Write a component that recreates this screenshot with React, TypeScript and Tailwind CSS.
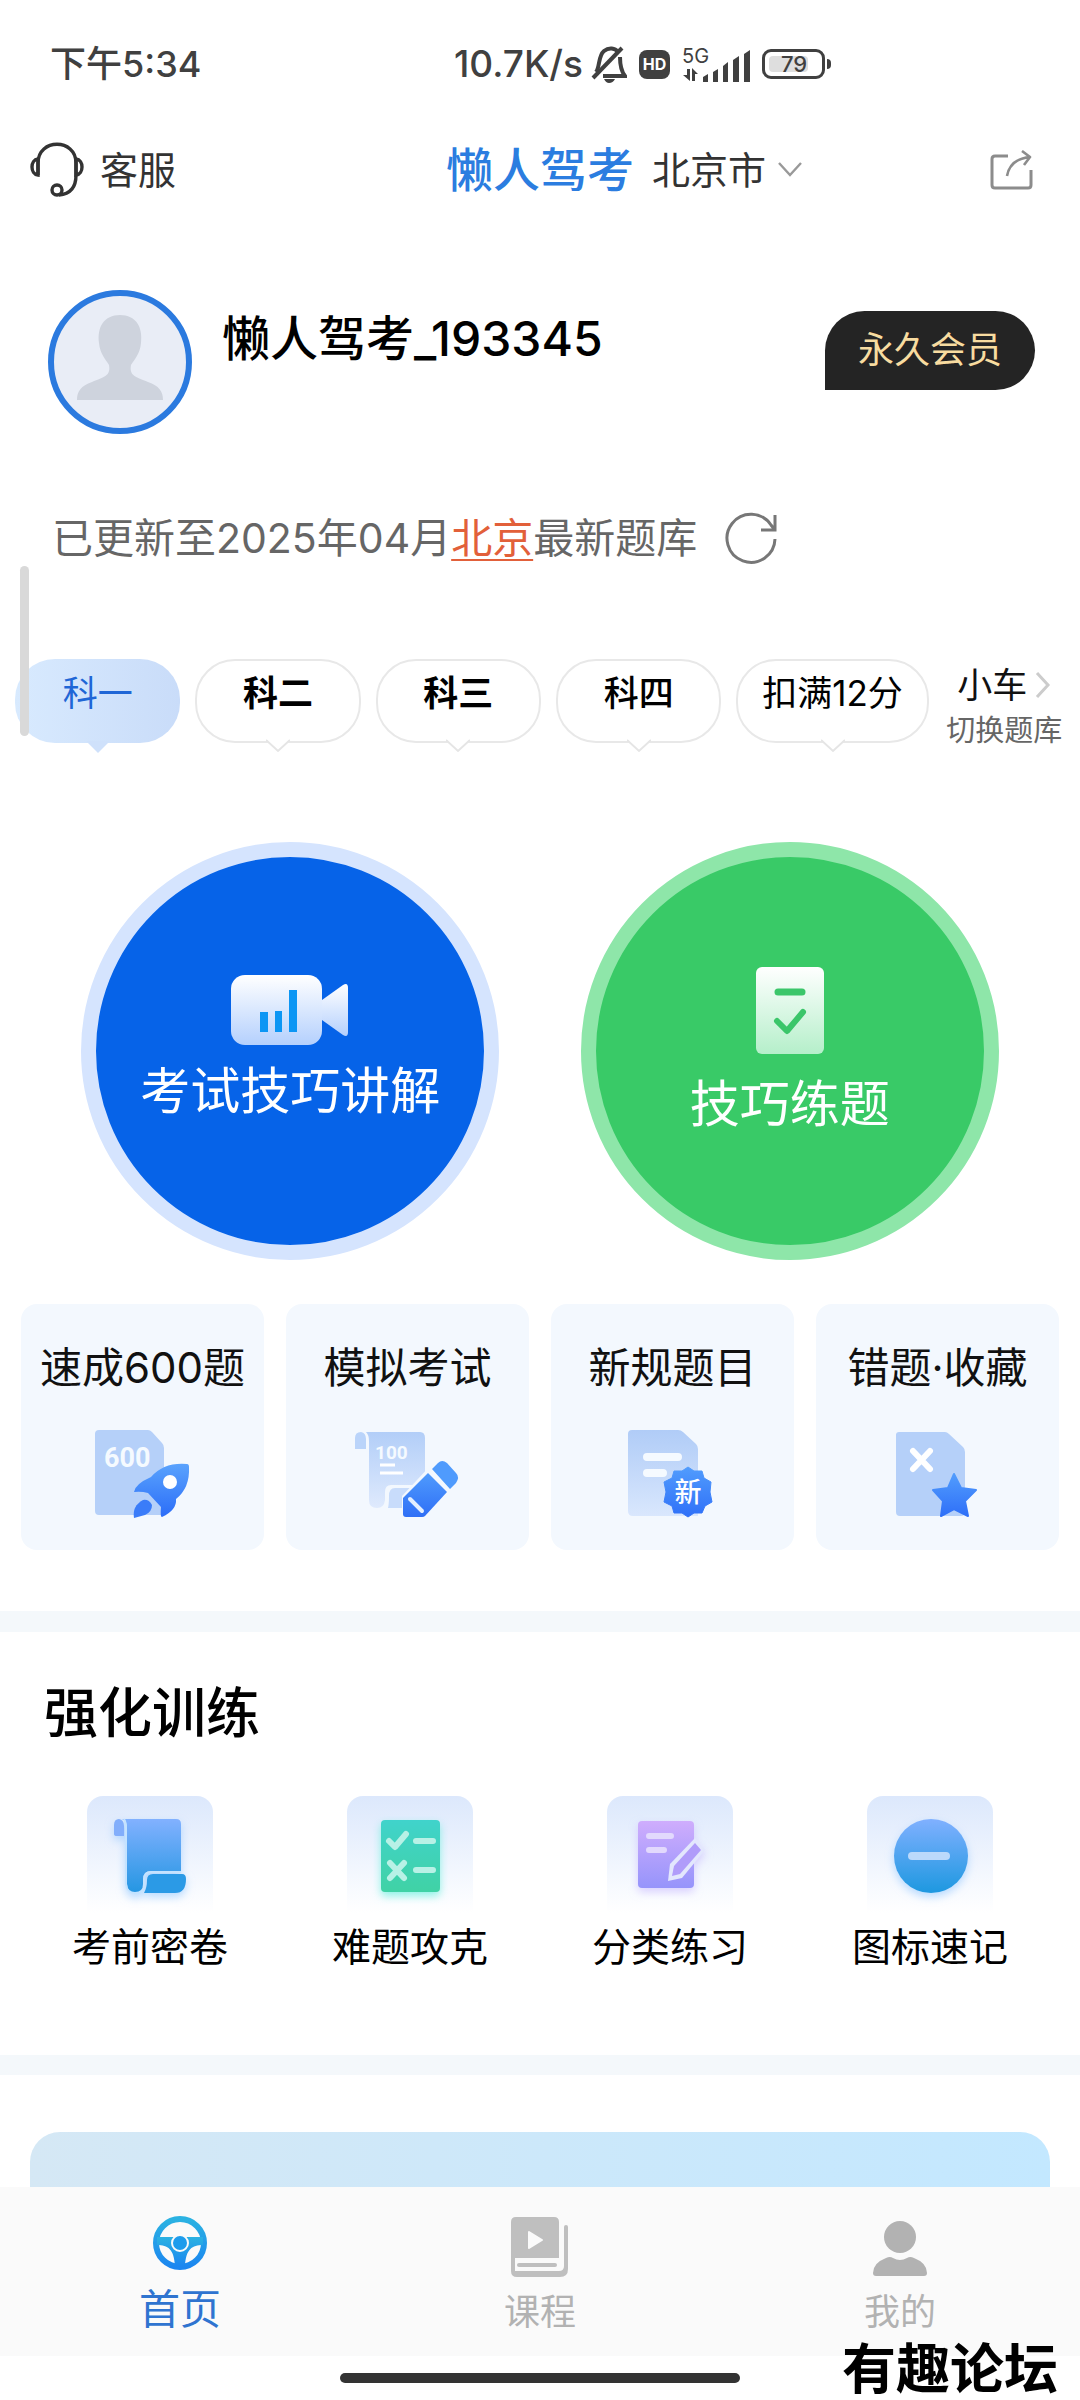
import { useState } from 'react'
import type { ReactNode } from 'react'

type Tab = { label: string; weight: string }

const tabs: Tab[] = [
  { label: '科一', weight: 'font-normal' },
  { label: '科二', weight: 'font-bold' },
  { label: '科三', weight: 'font-bold' },
  { label: '科四', weight: 'font-medium' },
  { label: '扣满12分', weight: 'font-normal' },
]

// one vertical gradient, top to bottom
function Fade({ id, from, to }: { id: string; from: string; to: string }) {
  return (
    <linearGradient id={id} x1="0" y1="0" x2="0" y2="1">
      <stop offset="0" stopColor={from} />
      <stop offset="1" stopColor={to} />
    </linearGradient>
  )
}

function StatusBar() {
  return (
    <div className="flex h-32 items-center pl-[50px] text-4xl font-medium text-[#404040]">
      <span className="w-[404px]">下午5:34</span>
      <span className="text-[37px]">10.7K/s</span>
      <svg className="ml-2 h-10 w-9" viewBox="0 0 36 40" fill="none" stroke="#404040" strokeWidth="4">
        <path d="M5 28 C9 23 7 12 13 7 C18 3 24 4 27 8" />
        <path d="M2 34 L31 4" />
        <path d="M29 13 C29 22 30 27 34 32 H12" />
        <path d="M13 35 H24 Q22 39 18 39 Q15 39 13 35Z" fill="#404040" stroke="none" />
      </svg>
      <span className="ml-3 flex h-[29px] w-[31px] items-center justify-center rounded-lg bg-[#404040] text-base font-bold text-white">HD</span>
      <div className="ml-3 flex h-9 w-[68px] items-end">
        <div className="flex w-5 flex-col">
          <span className="text-xl leading-5 font-normal">5G</span>
          <svg className="h-4 w-5" viewBox="0 0 20 16" fill="#404040">
            <path d="M5 3 h3 v12 L1 9 h4z M10 15 h3 V8 h3 L10 2z" />
          </svg>
        </div>
        <svg className="h-8 w-12" viewBox="0 0 48 32" fill="#404040">
          <path d="M1 27 L6 24 V32 H1z M11 22 L16 19 V32 H11z M21 16 L26 12 V32 H21z M31 10 L37 6 V32 H31z M42 4 L48 0 V32 H42z" />
        </svg>
      </div>
      <div className="ml-3 flex h-[30px] w-[63px] items-center rounded-[9px] border-[3px] border-[#404040] p-1">
        <span className="h-full w-[39px] rounded-sm bg-[#dedede] pl-3 text-[22px] leading-4">79</span>
      </div>
      <span className="ml-[2px] h-[10px] w-1 rounded-r bg-[#404040]" />
    </div>
  )
}

function Header() {
  return (
    <header className="grid h-[84px] grid-cols-[1fr_auto_1fr] items-center px-[30px] text-[38px] text-[#333]">
      <button type="button" className="flex items-center gap-4 justify-self-start">
        <svg className="h-[56px] w-[54px]" viewBox="0 0 54 56" fill="none" stroke="#333" strokeWidth="3.4">
          <path d="M8 33 V21 C8 -4 46 -4 46 21 V33 C46 45 41 52 29 53" />
          <path d="M8 17 C0 18 0 32 8 33z M46 17 C54 18 54 32 46 33z" />
          <circle cx="27" cy="48" r="5" />
        </svg>
        客服
      </button>
      <h1 className="text-[47px] font-medium text-[#2b7de0]">懒人驾考</h1>
      <div className="flex items-center justify-between pl-[18px]">
        <button type="button" className="flex items-center gap-3">
          北京市
          <svg className="h-4 w-6" viewBox="0 0 24 16" fill="none" stroke="#999" strokeWidth="2.4">
            <path d="M1 1 L12 13 L23 1" />
          </svg>
        </button>
        <button type="button" aria-label="分享">
          <svg className="mr-4 h-10 w-[44px]" viewBox="0 0 44 40" fill="none" stroke="#8c8c8c" strokeWidth="3" strokeLinejoin="round">
            <path d="M18 6 H5 Q2 6 2 9 V35 Q2 38 5 38 H38 Q41 38 41 35 V20" />
            <path d="M17 26 Q20 9 40 7 M32 1 L40 7 L34 15" strokeWidth="2.6" />
          </svg>
        </button>
      </div>
    </header>
  )
}

function Profile() {
  return (
    <section className="mt-[78px] flex items-start pr-[45px] pl-12">
      <div className="h-36 w-36 overflow-hidden rounded-full border-[6px] border-[#2b7adf] bg-[#e9edf6]">
        <svg viewBox="0 0 132 132">
          <path
            d="M66 19 C82 19 89 31 87 47 C86 58 80 64 77 69 C75 80 82 81 94 86 C105 90 109 95 109 104 H23 C23 95 27 90 38 86 C50 81 57 80 55 69 C52 64 46 58 45 47 C43 31 50 19 66 19Z"
            fill="#ced3dd"
          />
        </svg>
      </div>
      <p className="ml-[30px] flex-1 pt-4 text-5xl leading-[66px] font-medium text-black">懒人驾考_193345</p>
      <span className="mt-[21px] rounded-[40px] rounded-bl-none bg-[#242424] px-[33px] py-3 text-4xl leading-[55px] text-[#f8dca0]">永久会员</span>
    </section>
  )
}

function TabTail({ active }: { active: boolean }) {
  return (
    <svg className="absolute -bottom-3 left-1/2 h-[14px] w-6 -translate-x-1/2" viewBox="0 0 24 14">
      <path d="M0 0 L12 12 L24 0z" fill={active ? '#cfe1fb' : '#fff'} />
      {!active && <path d="M0 1 L12 12 L24 1" fill="none" stroke="#e5e5e5" strokeWidth="2" />}
    </svg>
  )
}

function SubjectTabs() {
  const [current, setCurrent] = useState('科一')

  return (
    <nav className="mt-[95px] grid grid-cols-[165fr_165fr_165fr_165fr_192fr_121fr] gap-[15px] px-[15px]">
      {tabs.map((t) => {
        const active = t.label === current
        return (
          <button
            key={t.label}
            type="button"
            onClick={() => setCurrent(t.label)}
            className={`relative h-[84px] rounded-[40px] pb-4 text-[35px] whitespace-nowrap ${t.weight} ${
              active ? 'bg-linear-to-r from-[#d8eafe] to-[#c9dcf9] text-[#1f66d6]' : 'border-2 border-[#e8e8e8] bg-white text-black'
            }`}
          >
            {t.label}
            <TabTail active={active} />
          </button>
        )
      })}
      <button type="button" className="flex flex-col items-center whitespace-nowrap text-[#111]">
        <span className="flex items-center gap-2 text-[35px] leading-[52px]">
          小车
          <svg className="h-7 w-4" viewBox="0 0 16 28" fill="none" stroke="#ccc" strokeWidth="3">
            <path d="M2 2 L13 14 L2 26" />
          </svg>
        </span>
        <span className="text-[29px] leading-10 text-[#666]">切换题库</span>
      </button>
    </nav>
  )
}

function BigCircle({ color, label, children }: { color: string; label: string; children: ReactNode }) {
  return (
    <button
      type="button"
      className={`flex h-[418px] w-[418px] flex-col items-center justify-center rounded-full border-[15px] text-[50px] leading-[72px] text-white ${color}`}
    >
      {children}
      {label}
    </button>
  )
}

function VideoIcon() {
  return (
    <svg className="mb-[10px] h-[70px] w-[118px]" viewBox="0 0 118 70">
      <defs>
        <Fade id="video" from="#ffffff" to="#b4d0fd" />
      </defs>
      <rect width="91" height="70" rx="14" fill="url(#video)" />
      <path d="M91 25 L112 10 Q117 7 117 13 V57 Q117 63 112 60 L91 45z" fill="url(#video)" />
      <path d="M29 37 h8 v20 h-8z M44 36 h7 v21 h-7z M58 15 h8 v42 h-8z" fill="#0c96f4" />
    </svg>
  )
}

function TestIcon() {
  return (
    <svg className="mt-1 mb-[14px] h-[87px] w-[68px]" viewBox="0 0 68 87">
      <defs>
        <Fade id="test" from="#ffffff" to="#b5efca" />
      </defs>
      <rect width="68" height="87" rx="6" fill="url(#test)" />
      <path d="M22 25 H46" stroke="#3bc66a" strokeWidth="7" strokeLinecap="round" />
      <path d="M21 54 L31 64 L47 45" fill="none" stroke="#3bc66a" strokeWidth="6" strokeLinecap="round" strokeLinejoin="round" />
    </svg>
  )
}

function Icon600() {
  return (
    <svg className="h-24 w-[110px]" viewBox="0 0 110 96">
      <defs>
        <Fade id="rocket" from="#5aa3fd" to="#2b6df8" />
      </defs>
      <path d="M11 4 H60 Q62 4 64 6 L74 17 Q76 19 76 22 V85 Q76 89 72 89 H11 Q7 89 7 85 V8 Q7 4 11 4z" fill="#b5d0f9" />
      <text x="16" y="41" fontSize="27" fontWeight="700" fontFamily="Roboto, sans-serif" fill="#f5faff">600</text>
      <path
        d="M46 66 Q47 58 63 51 Q76 36 99 38 Q101 38 101 41 Q102 62 88 73 Q89 84 74 91 Q72 91 73 81 L60 67 Q53 65 46 66Z"
        fill="url(#rocket)"
      />
      <circle cx="82" cy="56" r="7" fill="#fff" />
      <path d="M46 92 Q44 80 55 74 Q61 73 64 79 Q64 86 57 89z" fill="#3a7cf9" />
    </svg>
  )
}

function IconMock() {
  return (
    <svg className="h-24 w-[110px]" viewBox="0 0 110 96">
      <defs>
        <Fade id="sheet" from="#b2cef8" to="#dfeafd" />
        <Fade id="pencil" from="#4f9bfd" to="#2f6ff6" />
      </defs>
      <path d="M2 23 V12 Q2 6 8 6 Q13 7 13 13 V23z" fill="#bad4fa" />
      <path d="M15 6 H67 Q72 6 72 12 V59 H38 Q32 59 32 66 V74 Q31 82 24 82 Q16 82 16 74 V15 Q16 9 13 6z" fill="url(#sheet)" />
      <path d="M35 82 Q36 78 36 70 Q36 62 42 62 H68 V82z" fill="#c8dcfb" />
      <text x="22" y="33" fontSize="19" fontWeight="700" fontFamily="Roboto, sans-serif" fill="#f5faff">100</text>
      <path d="M27 39 H42 M27 47 H50" stroke="#fff" strokeWidth="3" />
      <path d="M78 39 L97 64 L72 92 H52 Q49 92 49 88 V70z" fill="#f3f8fe" />
      <path d="M50 72 L75 47 L94 66 L72 90 Q71 91 69 91 H53 Q50 91 50 88z" fill="url(#pencil)" />
      <path d="M79 43 L85 37 Q89 33 94 37 L103 47 Q107 51 103 57 L97 63z" fill="#4f9bfd" />
      <path d="M57 73 L69 85" stroke="#e3efff" strokeWidth="4" strokeLinecap="round" />
    </svg>
  )
}

function IconNew() {
  return (
    <svg className="h-24 w-[110px]" viewBox="0 0 110 96">
      <defs>
        <Fade id="newdoc" from="#b0ccf7" to="#d9e7fd" />
        <Fade id="seal" from="#519cfd" to="#2f70f8" />
      </defs>
      <path d="M14 4 H60 Q63 4 65 6 L78 18 Q80 20 80 23 V90 H15 Q10 90 10 85 V8 Q10 4 14 4z" fill="url(#newdoc)" />
      <path d="M29 31 H60 M29 47 H45" stroke="#f5faff" strokeWidth="8" strokeLinecap="round" />
      <path
        d="M70 41 L76 45 L84 45 L86 52 L93 56 L92 66 L94 76 L87 80 L84 87 L76 87 L70 91 L64 87 L56 87 L54 80 L46 76 L48 66 L46 56 L54 52 L56 45 L64 45z"
        fill="url(#seal)"
        stroke="url(#seal)"
        strokeLinejoin="round"
      />
      <text x="70" y="76" fontSize="27" fontWeight="500" textAnchor="middle" fill="#fff">新</text>
    </svg>
  )
}

function IconWrong() {
  return (
    <svg className="h-24 w-[110px]" viewBox="0 0 110 96">
      <path d="M16 6 H62 Q64 6 66 8 L80 21 Q82 23 82 26 V86 Q82 90 78 90 H17 Q13 90 13 86 V9 Q13 6 16 6z" fill="#b5d0f9" />
      <path d="M30 25 L47 43 M47 25 L30 43" stroke="#fff" strokeWidth="6" strokeLinecap="round" />
      <path
        d="M71 48 L78 62 L93 64 L82 75 L85 90 L71 83 L58 90 L60 75 L50 64 L65 62z"
        fill="url(#seal)"
        stroke="url(#seal)"
        strokeWidth="2"
        strokeLinejoin="round"
      />
    </svg>
  )
}

function PaperIcon() {
  return (
    <g>
      <defs>
        <Fade id="paper" from="#82b1ff" to="#2496e2" />
      </defs>
      <path d="M27 38 V29 Q27 23 32 23 Q37 24 37 30 V40 H30 Q27 40 27 38z" fill="#82aefb" />
      <path d="M35 23 H89 Q94 23 94 28 V75 H64 Q57 75 57 82 V88 Q56 97 48 97 Q40 97 40 88 V32 Q40 25 35 23z" fill="url(#paper)" />
      <path d="M37 23 Q39 26 39 32 V88 Q40 97 48 97 Q57 97 57 88 V83 Q57 76 64 76 H94" fill="none" stroke="#c4e3ff" strokeWidth="2" />
      <path d="M57 97 Q60 92 60 84 Q60 78 66 78 H95 Q99 78 99 83 Q99 97 88 97z" fill="#2b9ae6" />
    </g>
  )
}

function HardIcon() {
  return (
    <g fill="none" stroke="#b8f1e6" strokeWidth="6" strokeLinecap="round" strokeLinejoin="round">
      <defs>
        <Fade id="hard" from="#40d3cb" to="#40d2a5" />
      </defs>
      <rect x="34" y="24" width="59" height="72" rx="4" fill="url(#hard)" stroke="none" />
      <path d="M42 45 L48 51 L59 38 M69 45 H86 M69 74 H86 M43 67 L57 82 M57 67 L43 82" />
    </g>
  )
}

function SortIcon() {
  return (
    <g strokeLinecap="round">
      <defs>
        <Fade id="sort" from="#cfadfd" to="#9694fb" />
      </defs>
      <rect x="31" y="25" width="56" height="67" rx="4" fill="url(#sort)" />
      <path d="M42 40 H64 M42 54 H57" stroke="#e2d9fd" strokeWidth="6" />
      <path d="M88 42 L98 54 L75 82 L61 85 L63 68z" fill="#e3e7fd" />
      <path d="M88 47 L94 54 L73 78 L65 80 L67 70z" fill="#b09cfa" />
    </g>
  )
}

function SignIcon() {
  return (
    <g>
      <defs>
        <Fade id="sign" from="#80b0ff" to="#1d98e0" />
      </defs>
      <circle cx="64" cy="60" r="37" fill="url(#sign)" />
      <path d="M45 60 H79" stroke="#bbd9fb" strokeWidth="8" strokeLinecap="round" />
    </g>
  )
}

const cards = [
  { label: '速成600题', icon: <Icon600 /> },
  { label: '模拟考试', icon: <IconMock /> },
  { label: '新规题目', icon: <IconNew /> },
  { label: '错题·收藏', icon: <IconWrong /> },
]

const trainings = [
  { label: '考前密卷', icon: <PaperIcon />, shadow: 'drop-shadow-blue-300/60' },
  { label: '难题攻克', icon: <HardIcon />, shadow: 'drop-shadow-teal-300/60' },
  { label: '分类练习', icon: <SortIcon />, shadow: 'drop-shadow-violet-300/60' },
  { label: '图标速记', icon: <SignIcon />, shadow: 'drop-shadow-blue-300/60' },
]

function BottomNav() {
  return (
    <nav className="grid h-[169px] grid-cols-3 bg-[#fafafa] text-4xl text-[#b2b2b2]">
      <a href="#home" className="flex flex-col items-center pt-7 text-[41px] text-[#2f74d0]">
        <svg className="h-14 w-14" viewBox="0 0 56 56">
          <defs>
            <Fade id="wheel" from="#2bb2e2" to="#1b86f0" />
          </defs>
          <circle cx="28" cy="28" r="24" fill="none" stroke="url(#wheel)" strokeWidth="6" />
          <path d="M5 22 H51 V30 C40 30 34 34 33 51 H23 C22 34 16 30 5 30z" fill="url(#wheel)" />
          <circle cx="28" cy="28" r="8" fill="#1d9cec" stroke="#fafafa" strokeWidth="2" />
        </svg>
        <span className="mt-2 leading-[60px]">首页</span>
      </a>
      <a href="#course" className="flex flex-col items-center pt-[30px]">
        <svg className="h-[60px] w-[58px]" viewBox="0 0 58 60" fill="none" stroke="#bfbfbf">
          <path d="M5 0 H43 Q48 0 48 5 V41 H4 V54 H48 Q53 54 53 49 V10 Q53 8 55 8 Q57 8 57 10 V52 Q57 60 49 60 H6 Q0 60 0 54 V5 Q0 0 5 0z" fill="#bfbfbf" stroke="none" />
          <path d="M8 48 H44" strokeWidth="4" strokeLinecap="round" />
          <path d="M18 15 L31 23 L18 31z" fill="#fafafa" stroke="#fafafa" strokeWidth="2" strokeLinejoin="round" />
        </svg>
        <span className="mt-2 leading-[54px]">课程</span>
      </a>
      <a href="#mine" className="flex flex-col items-center pt-[34px]">
        <svg className="h-14 w-14" viewBox="0 0 56 56" fill="#b2b2b2">
          <circle cx="28" cy="16" r="16" />
          <path d="M14 37 Q18 35 21 37 Q28 41 35 37 Q38 35 42 37 Q55 42 55 52 Q55 55 52 55 H4 Q1 55 1 52 Q1 42 14 37z" />
        </svg>
        <span className="mt-2 leading-[54px]">我的</span>
      </a>
    </nav>
  )
}

export default function App() {
  return (
    <div className="relative flex min-h-screen flex-col bg-white font-[Inter,'Noto_Sans_CJK_SC',sans-serif] text-black">
      <StatusBar />
      <Header />
      <span className="absolute top-[566px] left-5 z-10 h-[170px] w-[9px] rounded-full bg-[#d9d9d9]" />

      <main className="flex flex-1 flex-col">
        <Profile />

        <div className="mt-[78px] flex items-center pl-[52px] text-[41px] leading-[52px] text-[#666]">
          <p>
            已更新至2025年04月
            <a href="#beijing" className="text-[#e2603a] underline decoration-2 underline-offset-[6px]">北京</a>
            最新题库
          </p>
          <button type="button" aria-label="刷新" className="ml-7">
            <svg className="h-[52px] w-[52px]" viewBox="0 0 52 52" fill="none" stroke="#777" strokeWidth="3">
              <path d="M50 27 A24 24 0 1 1 46 13 L50 18 M50 3 V18 H36" />
            </svg>
          </button>
        </div>

        <SubjectTabs />

        <section className="mt-[91px] flex justify-evenly">
          <BigCircle color="border-[#d5e4fe] bg-[#0663e8]" label="考试技巧讲解">
            <VideoIcon />
          </BigCircle>
          <BigCircle color="border-[#8ee6a9] bg-[#39ca67]" label="技巧练题">
            <TestIcon />
          </BigCircle>
        </section>

        <section className="mt-11 grid grid-cols-4 gap-[22px] px-[21px]">
          {cards.map((c) => (
            <button key={c.label} type="button" className="flex h-[246px] flex-col items-center rounded-2xl bg-[#f3f8fe] pt-[34px] text-[42px] leading-[60px] whitespace-nowrap text-[#111]">
              <span className="mb-7">{c.label}</span>
              {c.icon}
            </button>
          ))}
        </section>

        <section className="mt-[61px] border-t-[21px] border-[#f4f8fb] px-5 pt-11">
          <h2 className="ml-6 text-[54px] leading-[76px] font-medium">强化训练</h2>
          <div className="mt-11 grid grid-cols-4">
            {trainings.map((t) => (
              <button key={t.label} type="button" className="flex flex-col items-center text-[39px] leading-[60px]">
                <svg className="h-[117px] w-[126px] rounded-t-2xl bg-linear-to-b from-[#dce8fc] to-white" viewBox="0 0 126 117">
                  <g className={`drop-shadow-lg ${t.shadow}`}>{t.icon}</g>
                </svg>
                <span className="mt-1">{t.label}</span>
              </button>
            ))}
          </div>
        </section>

        <section className="mt-[78px] flex flex-1 flex-col border-t-[20px] border-[#f4f8fb] px-[30px] pt-[57px]">
          <div className="min-h-[54px] flex-1 rounded-t-[30px] bg-linear-to-r from-[#d5e8f5] to-[#c3e8ff]" />
        </section>
      </main>

      <BottomNav />
      <footer className="relative flex h-11 items-center justify-center">
        <span className="h-[10px] w-[400px] rounded-full bg-[#333]" />
        <span className="absolute right-[22px] bottom-1 text-[54px] leading-[52px] font-bold">有趣论坛</span>
      </footer>
    </div>
  )
}
